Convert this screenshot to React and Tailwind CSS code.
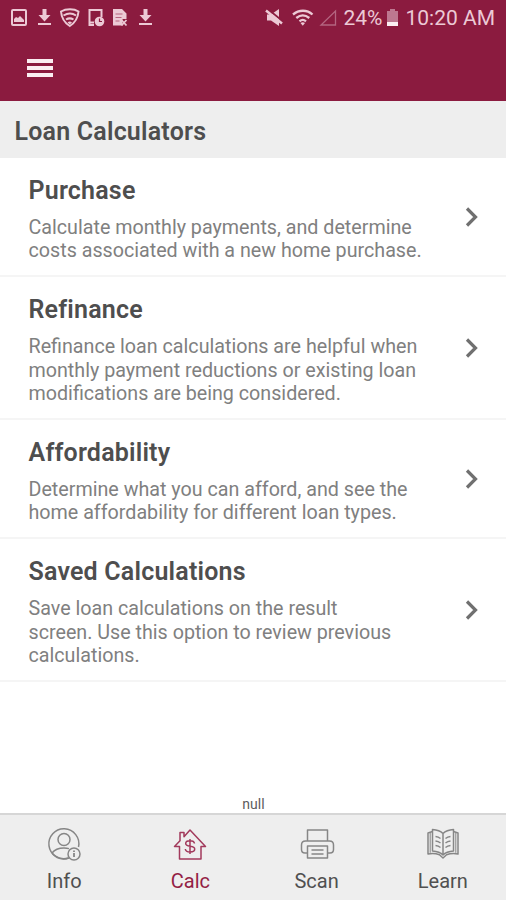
import React, { useState } from 'react';
import clsx from 'clsx';

const CALCULATORS = [
  {
    id: 'purchase',
    title: 'Purchase',
    lines: ['Calculate monthly payments, and determine', 'costs associated with a new home purchase.'],
  },
  {
    id: 'refinance',
    title: 'Refinance',
    lines: [
      'Refinance loan calculations are helpful when',
      'monthly payment reductions or existing loan',
      'modifications are being considered.',
    ],
  },
  {
    id: 'affordability',
    title: 'Affordability',
    lines: ['Determine what you can afford, and see the', 'home affordability for different loan types.'],
  },
  {
    id: 'saved',
    title: 'Saved Calculations',
    lines: ['Save loan calculations on the result', 'screen. Use this option to review previous', 'calculations.'],
  },
];

const TABS = [
  { id: 'info', label: 'Info', Icon: InfoIcon },
  { id: 'calc', label: 'Calc', Icon: HouseIcon },
  { id: 'scan', label: 'Scan', Icon: PrinterIcon },
  { id: 'learn', label: 'Learn', Icon: BookIcon },
];

export default function App() {
  const [tab, setTab] = useState('calc');

  return (
    <div className="flex h-[900px] w-[506px] flex-col overflow-hidden bg-white font-[Roboto,sans-serif]">
      <header className="h-[101px] shrink-0 bg-[#8b1b3f]">
        <StatusBar />
        <button className="mt-[22px] ml-[27px] flex w-[26px] flex-col gap-[3px]" aria-label="Menu">
          <span className="h-1 w-full bg-[#fbeef2]" />
          <span className="h-1 w-full bg-[#fbeef2]" />
          <span className="h-1 w-full bg-[#fbeef2]" />
        </button>
      </header>

      <h1 className="h-[57px] shrink-0 bg-[#eeeeee] pl-[14.5px] text-[25px] leading-[61px] font-semibold tracking-[0.2px] text-[#4e4e4e]">
        Loan Calculators
      </h1>

      <main className="flex-1">
        {CALCULATORS.map((c) => (
          <CalculatorRow key={c.id} title={c.title} lines={c.lines} />
        ))}
      </main>

      <p className="h-[17px] pl-px text-center text-[14px] leading-[17px] text-[#5c5c5c]">null</p>

      <nav className="flex h-[87px] shrink-0 border-t-2 border-[#d6d6d6] bg-[#eeeeee] pl-px">
        {TABS.map(({ id, label, Icon }) => (
          <button
            key={id}
            onClick={() => setTab(id)}
            className={clsx('flex flex-1 flex-col items-center pt-[10px]', tab === id ? 'text-[#941f45]' : 'text-[#505050]')}
          >
            <span className={tab === id ? 'text-[#a23a5c]' : 'text-[#868686]'}>
              <Icon />
            </span>
            <span className="mt-[8px] text-[20px] leading-6">{label}</span>
          </button>
        ))}
      </nav>
    </div>
  );
}

function CalculatorRow({ title, lines }) {
  return (
    <div className="flex items-center justify-between border-b-2 border-[#f5f5f5] pt-4 pr-[27px] pb-[13px] pl-[28.5px]">
      <div>
        <h2 className="text-[25px] leading-[34px] font-semibold tracking-[0.2px] text-[#4e4e4e]">{title}</h2>
        <p className="mt-[8px] text-[19.7px] leading-[23.2px] whitespace-nowrap text-[#808080]">
          {lines.map((line) => (
            <span key={line} className="block">{line}</span>
          ))}
        </p>
      </div>
      <svg className="-mt-[2px]" width="14" height="22" viewBox="0 0 14 22" fill="none" stroke="#707070" strokeWidth="3.2">
        <path d="M2 2.500l8.500 8.500L2 19.500" />
      </svg>
    </div>
  );
}

function StatusBar() {
  return (
    <div className="flex h-[37px] items-center justify-between pr-[11px] pl-[10px] text-[#ecc9d5]">
      <svg className="-mt-[2px]" width="144" height="20" viewBox="10 8 144 20" fill="none" stroke="currentColor" strokeWidth="2">
        {/* picture */}
        <rect x="12" y="10" width="14" height="15" rx="1" />
        <path d="M14 22v-3l2-2 2 1 2-2 4 4v2z" fill="currentColor" stroke="none" />
        <DownloadGlyph x={38} />
        {/* shielded wifi */}
        <path d="M61 11.5c5-3 13-3 17.500 0-.5 6-3 11-8.700 14.500C64 22.500 61.500 17.500 61 11.500z" />
        <path d="M63.500 15.500c4-2.500 9-2.500 12.500 0M66 19.500c2.500-1.500 5-1.500 7.500 0" />
        <path d="M67.500 22.500q2.300-2 4.500 0l-2.200 2z" fill="currentColor" stroke="none" />
        {/* device with clock */}
        <path d="M94 25h-4.500V10h12v7" />
        <path d="M90 22.500h4" />
        <circle cx="99.500" cy="21.500" r="4.800" fill="currentColor" stroke="none" />
        <path d="M99.500 18.500v3h2.500" stroke="#8b1b3f" strokeWidth="1.200" />
        {/* sim card error */}
        <path d="M113 9h9l4.500 4.500V19h-4v6.500H113z" fill="currentColor" stroke="none" />
        <path d="M115.500 14h7M115.500 17.500h6M115.500 21h4" stroke="#b5647f" strokeWidth="1.200" />
        <path d="M121.500 20l5 5.500M126.500 20l-5 5.500" strokeWidth="1.800" />
        <DownloadGlyph x={139} />
      </svg>
      <div className="flex items-center text-[21px] leading-none">
        <svg className="-mt-[2px]" width="72" height="20" viewBox="265 8 72 20" fill="none">
          {/* muted speaker */}
          <path d="M267 14.500h4l8-5.500v17l-8-5.500h-4z" fill="currentColor" />
          <path d="M267 8.500l16 13" stroke="#8b1b3f" strokeWidth="2" />
          <path d="M266 10.500l16 13" stroke="currentColor" strokeWidth="2.500" />
          {/* wifi */}
          <g stroke="currentColor" strokeWidth="2.300">
            <path d="M293 14.500c6-5 14-5 19.500 0M296.300 18c4-3.300 9-3.300 13 0M299.500 21.300c2-1.700 4.500-1.700 6.500 0" />
          </g>
          <path d="M300.500 23q2.300-1.500 4.500 0l-2.200 2.700z" fill="currentColor" />
          {/* empty signal */}
          <path d="M321 25h14.500V11z" stroke="#b46580" strokeWidth="1.300" />
        </svg>
        <span className="ml-[6px]">24%</span>
        <svg className="-mt-[2px] ml-[4px]" width="13" height="18" viewBox="0 0 13 18">
          <path d="M4 0h5v2h3v11H1V2h3z" fill="#bd7890" />
          <path d="M1 13h11v4H1z" fill="#fbeef2" />
        </svg>
        <span className="ml-[6px]">10:20 AM</span>
      </div>
    </div>
  );
}

function DownloadGlyph({ x }) {
  return (
    <g transform={`translate(${x} 9)`} fill="currentColor" stroke="none">
      <path d="M4.500 0h4v6h4L6.500 12.500.5 6h4z" />
      <path d="M0 14h13v2H0z" />
    </g>
  );
}

function TabSvg({ children }) {
  return (
    <svg width="36" height="36" viewBox="0 0 36 36" fill="none" stroke="currentColor" strokeWidth="1.500" strokeLinejoin="round">
      {children}
    </svg>
  );
}

function InfoIcon() {
  return (
    <TabSvg>
      <path d="M22.500 33A15 15 0 1 1 32.500 22" />
      <circle cx="18" cy="14.500" r="6" />
      <path d="M6 28c3-4 7-5 12-5 2 0 3.500.2 5 .6" />
      <path d="M6 28c4 5 10.500 7 17 5" />
      <circle cx="28" cy="29" r="6" />
      <path d="M28 28v4M28 25.500v1.500" strokeWidth="1.800" />
    </TabSvg>
  );
}

function HouseIcon() {
  return (
    <TabSvg>
      <path d="M7.500 34V21.500H2.500L8 15.800V7.500h4v4.200l6-6.700L33.500 21.500H29V34z" />
      <path d="M22.500 18.500c-.3-2-2-2.700-4.500-2.700-2.700 0-4.300 1-4.300 2.700 0 4 9 1.700 9 5.500 0 1.800-1.800 3-4.500 3-2.900 0-4.700-1-4.900-3M18 14v15" />
    </TabSvg>
  );
}

function PrinterIcon() {
  return (
    <TabSvg>
      <path d="M8.500 16V5h20v11" />
      <path d="M8.500 28H6c-2 0-3.500-1.500-3.500-3.500V20c0-2.200 1.500-4 4-4h24c2.500 0 4 1.800 4 4v4.500c0 2-1.500 3.500-3.500 3.500h-2.500" />
      <path d="M8.500 21h20v12h-20z" />
      <path d="M12.500 25h12M12.500 29h12" />
    </TabSvg>
  );
}

function BookIcon() {
  return (
    <TabSvg>
      <path d="M18 8.500C15.500 6 11.500 4.800 7.500 4.500V26c4 .3 8 1.500 10.500 4 2.500-2.500 6.500-3.700 10.500-4V4.500C24.500 4.800 20.500 6 18 8.500zM18 8.500V30" />
      <path d="M7.500 6.500L3 8v21c4-.8 8.500-.3 11.500.7L18 33l3.500-3.300c3-1 7.500-1.500 11.500-.7V8l-4.500-1.500" />
      <path d="M5.200 7.500v20.300M30.800 7.500v20.300" strokeWidth="1" />
      <path d="M10.500 11.500c2 .2 3.500.8 5 2M10.500 16c2 .2 3.500.8 5 2M10.500 20.500c2 .2 3.500.8 5 2M25.500 11.500c-2 .2-3.500.8-5 2M25.500 16c-2 .2-3.500.8-5 2M25.500 20.500c-2 .2-3.500.8-5 2" />
    </TabSvg>
  );
}
